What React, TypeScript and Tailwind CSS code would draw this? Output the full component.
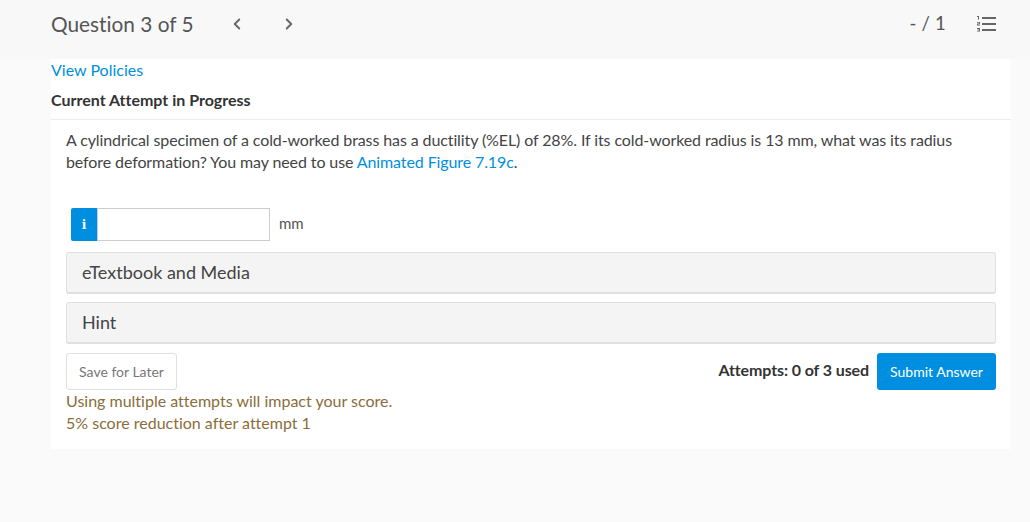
import { ChevronLeft, ChevronRight } from "lucide-react";

function ListIcon() {
  return (
    <svg width="19" height="16" viewBox="0 0 19 16" className="block text-[#666]">
      <rect x="5" y="1" width="14" height="2" fill="currentColor" />
      <rect x="5" y="7" width="14" height="2" fill="currentColor" />
      <rect x="5" y="13" width="14" height="2" fill="currentColor" />
      <path d="M0 0h2v3.500H1V1H0zM0 6h3v2H1v.6h2v.9H0V7.500h2V6.800H0zM0 12h3v3.600H0v-.8h2v-.6H.6v-.7H2v-.6H0z" fill="currentColor" />
    </svg>
  );
}

function Accordion({ label }: { label: string }) {
  return (
    <div className="flex h-[42px] items-center rounded-[3px] border border-[#e0e0e0] border-b-2 bg-[#f4f4f4] pl-[15px] text-[18px] text-[#444]">
      {label}
    </div>
  );
}

export default function App() {
  return (
    <div className="min-h-[522px] bg-[#fafafa] font-['Lato','Open_Sans',sans-serif] text-[16px] [font-variant-ligatures:none]">
      <header className="flex h-[59px] items-center bg-[#f8f8f8] pb-[12px] pl-[51px] pr-[34px] text-[#555]">
        <span className="w-[177px] text-[20.8px]">Question 3 of 5</span>
        <ChevronLeft className="h-[18px] w-[18px] text-[#666]" strokeWidth={2.5} />
        <ChevronRight className="ml-[34px] h-[18px] w-[18px] text-[#666]" strokeWidth={2.5} />
        <span className="ml-auto text-[18.5px] tracking-[0.2px]">- / 1</span>
        <span className="ml-[31px]">
          <ListIcon />
        </span>
      </header>

      <main className="ml-[51px] h-[390px] w-[960px] bg-white">
        <div className="border-b border-[#ececec] pb-[8px]">
          <a className="block h-[30px] leading-[22px] text-[#008fe0]">View Policies</a>
          <h2 className="text-[16px] font-bold leading-[22px] text-[#333]">Current Attempt in Progress</h2>
        </div>

        <section className="px-[15px] pt-[9px]">
          <p className="leading-[22px] tracking-[-0.105px] text-[#444]">
            A cylindrical specimen of a cold-worked brass has a ductility (%EL) of 28%. If its cold-worked radius is 13 mm, what was its radius
            <br />
            before deformation? You may need to use <a className="text-[#008fe0]">Animated Figure 7.19c</a>.
          </p>

          <div className="ml-[5px] mt-[35px] flex h-[33px] items-center">
            <div className="flex h-[33px] w-[26px] items-center justify-center rounded-l-[2px] bg-[#008fe0] font-['DejaVu_Serif',serif] text-[12px] font-bold text-white">
              i
            </div>
            <input className="h-[33px] w-[173px] border border-[#ccc] bg-white" aria-label="Answer" />
            <span className="mb-[2px] ml-[9px] text-[15px] text-[#555]">mm</span>
          </div>

          <div className="mt-[11px] flex flex-col gap-[8px]">
            <Accordion label="eTextbook and Media" />
            <Accordion label="Hint" />
          </div>

          <div className="mt-[9px] flex items-start justify-between">
            <button className="h-[37px] w-[111px] rounded-[3px] border border-[#e0e0e0] bg-white text-[14px] text-[#777]">
              Save for Later
            </button>
            <div className="flex items-center gap-[8px]">
              <span className="mb-[3px] font-bold tracking-[-0.1px] text-[#333]">Attempts: 0 of 3 used</span>
              <button className="h-[37px] w-[119px] rounded-[3px] bg-[#008fe0] text-[14px] text-white">Submit Answer</button>
            </div>
          </div>

          <p className="leading-[22px] text-[#8a6d3b]">
            Using multiple attempts will impact your score.
            <br />
            5% score reduction after attempt 1
          </p>
        </section>
      </main>
    </div>
  );
}
